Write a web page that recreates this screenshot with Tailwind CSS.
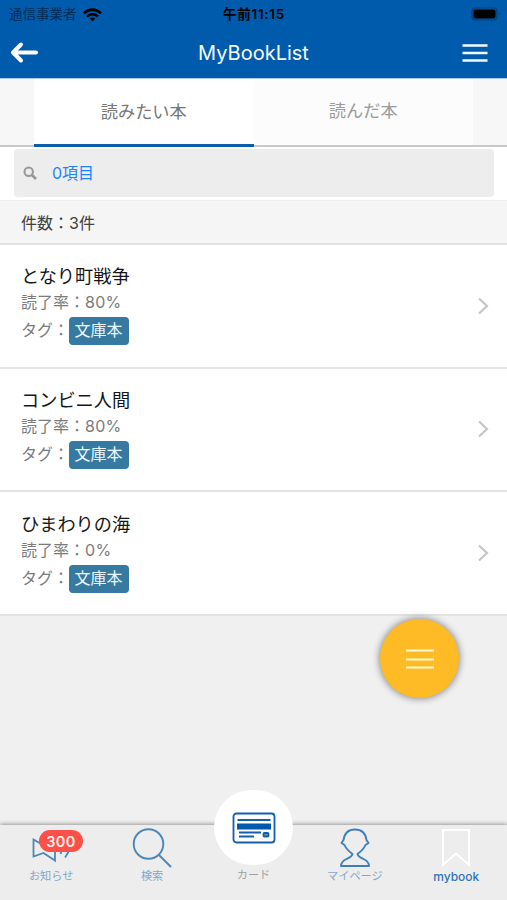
<!DOCTYPE html>
<html lang="ja">
<head>
<meta charset="utf-8">
<title>MyBookList</title>
<script src="https://cdn.jsdelivr.net/npm/@tailwindcss/browser@4"></script>
</head>
<body class="bg-[#f0f0f0]">
<div class="relative flex h-[900px] w-[507px] flex-col overflow-hidden bg-[#f0f0f0] font-['Inter','Noto_Sans_CJK_JP',sans-serif] whitespace-nowrap">
  <header class="h-[79px] shrink-0 border-b border-[#a9c9e8] bg-[#005bac]">
    <div class="grid h-[27px] grid-cols-[1fr_auto_1fr] items-center pr-[6px] pl-[7px] text-[13.5px] leading-[27px]">
      <div class="flex items-center gap-[6px] pt-[1px] pl-[2px]"><span class="text-[#032c55]">通信事業者</span>
        <svg class="h-[14px] w-[19px]" viewBox="0 0 19 14" fill="none" stroke="#000" stroke-width="2.7"><path d="M1 5.2Q9.500-2 18 5.200M4 8.500Q9.500 3.700 15 8.500"/><path d="M6.700 10.500Q9.500 8.300 12.300 10.500L9.500 13.300Z" fill="#000" stroke="none"/></svg>
      </div>
      <div class="pt-[1px] text-center text-[13.500px] font-semibold tracking-[0.7px] text-black">午前11:15</div>
      <svg class="h-[14px] w-[30px] justify-self-end" viewBox="0 0 30 14"><rect x="1" y="1" width="25" height="12" rx="3.500" fill="none" stroke="#034078" stroke-width="1.200"/><rect x="2.500" y="2.500" width="22" height="9" rx="2" fill="#000"/><path d="M28 5.500q1.500 1.500 0 3" fill="#034078"/></svg>
    </div>
    <div class="flex h-[51px] items-center justify-between pr-[19px] pl-[10px]">
      <svg class="h-[24px] w-[28px]" viewBox="0 0 28 24" fill="none" stroke="#fff" stroke-width="4" stroke-linecap="round" stroke-linejoin="round"><path d="M26 11.500H3M11 3.500L3 11.500L11 19.500"/></svg>
      <h1 class="pl-[7px] text-[20px] leading-[24px] font-normal text-[#f5faff]">MyBookList</h1>
      <svg class="h-[20px] w-[26px]" viewBox="0 0 26 20" fill="none" stroke="#f3faff" stroke-width="2.600"><path d="M.500 2.500h25M.500 10h25M.500 17.500h25"/></svg>
    </div>
  </header>
  <nav class="flex h-[68px] shrink-0 border-b-2 border-[#c8c8c8] bg-[#f7f7f7] px-[34px] text-[17.200px]">
    <div class="-mb-[2px] h-[68px] w-[220px] border-b-[3px] border-[#0c5dac] bg-white text-center leading-[65px] text-[#757575]">読みたい本</div>
    <div class="w-[220px] bg-[#fcfcfc] text-center leading-[63px] text-[#9b9b9b]">読んだ本</div>
  </nav>
  <div class="h-[53px] shrink-0 bg-white px-[14px] pt-[2px]">
    <div class="flex h-[48px] w-[480px] items-center gap-[15px] rounded-[4px] bg-[#ededed] pl-[9px] text-[16px] text-[#1f83f5]">
      <svg class="h-[14px] w-[14px]" viewBox="0 0 14 14" fill="none" stroke="#979797" stroke-width="2"><circle cx="5.700" cy="5.700" r="4.200"/><path d="M9 9L13 13" stroke-width="2.600"/></svg>
      <span>0項目</span>
    </div>
  </div>
  <div class="h-[45px] shrink-0 border-t border-b-2 border-t-[#ededed] border-b-[#e2e2e2] bg-[#f5f5f5] pl-[21px] text-[16px] leading-[44px] text-[#404040]">件数：3件</div>
  <main class="h-[371px] shrink-0 bg-white">
    <section class="flex h-[123.500px] items-center justify-between border-b-2 border-[#e4e4e4] pr-[18px] pl-[21px]">
      <div class="-mt-[4px]">
        <h2 class="text-[18.200px] leading-[27px] text-[#161616]">となり町戦争</h2>
        <p class="text-[16px] leading-[25px] text-[#7b7b7b]">読了率：<span class="tracking-[0.3px]">80%</span></p>
        <p class="mt-[1px] flex h-[28px] items-center text-[16px] text-[#7b7b7b]"><span class="w-[47.500px] overflow-hidden">タグ：</span><span class="mt-[2px] h-[28px] w-[60px] rounded-[4px] bg-[#367aa2] text-center leading-[27px] text-[#edf8ff]">文庫本</span></p>
      </div>
      <svg class="h-[18px] w-[12px]" viewBox="0 0 12 18" fill="none" stroke="#c5c5c5" stroke-width="2.200"><path d="M2 1.500L10 9L2 16.500"/></svg>
    </section>
    <section class="flex h-[123.500px] items-center justify-between border-b-2 border-[#e4e4e4] pr-[18px] pl-[21px]">
      <div class="-mt-[4px]">
        <h2 class="text-[18.200px] leading-[27px] text-[#161616]">コンビニ人間</h2>
        <p class="text-[16px] leading-[25px] text-[#7b7b7b]">読了率：<span class="tracking-[0.3px]">80%</span></p>
        <p class="mt-[1px] flex h-[28px] items-center text-[16px] text-[#7b7b7b]"><span class="w-[47.500px] overflow-hidden">タグ：</span><span class="mt-[2px] h-[28px] w-[60px] rounded-[4px] bg-[#367aa2] text-center leading-[27px] text-[#edf8ff]">文庫本</span></p>
      </div>
      <svg class="h-[18px] w-[12px]" viewBox="0 0 12 18" fill="none" stroke="#c5c5c5" stroke-width="2.200"><path d="M2 1.500L10 9L2 16.500"/></svg>
    </section>
    <section class="flex h-[124px] items-center justify-between border-b-2 border-[#e4e4e4] pr-[18px] pl-[21px]">
      <div class="-mt-[4px]">
        <h2 class="text-[18.200px] leading-[27px] text-[#161616]">ひまわりの海</h2>
        <p class="text-[16px] leading-[25px] text-[#7b7b7b]">読了率：<span class="tracking-[0.3px]">0%</span></p>
        <p class="mt-[1px] flex h-[28px] items-center text-[16px] text-[#7b7b7b]"><span class="w-[47.500px] overflow-hidden">タグ：</span><span class="mt-[2px] h-[28px] w-[60px] rounded-[4px] bg-[#367aa2] text-center leading-[27px] text-[#edf8ff]">文庫本</span></p>
      </div>
      <svg class="h-[18px] w-[12px]" viewBox="0 0 12 18" fill="none" stroke="#c5c5c5" stroke-width="2.200"><path d="M2 1.500L10 9L2 16.500"/></svg>
    </section>
  </main>
  <button class="absolute top-[619px] left-[380px] flex size-[79px] items-center justify-center rounded-full bg-[#ffbb25] shadow-[0_0_7px_1px_rgba(0,0,0,0.42)]">
    <svg class="h-[22px] w-[28px]" viewBox="0 0 28 22" fill="none" stroke="#fffbd8" stroke-width="2"><path d="M0 2.500h28M0 11.500h28M0 19.500h28"/></svg>
  </button>
  <footer class="relative mt-auto grid h-[75px] shrink-0 grid-cols-5 bg-[#ededed] text-center text-[11.200px] leading-[17px] text-[#7fa8cf] shadow-[0_-1px_4px_rgba(0,0,0,0.38)]">
    <div class="relative flex flex-col items-center pt-[3px]">
      <svg class="h-[40px] w-[42px]" viewBox="0 0 42 40" fill="none" stroke="#4a87bd" stroke-width="1.800"><path d="M3.500 11.500L13 17L25 9V32.500L13.500 25L3.500 28.500ZM30.500 26l1.500-4M35 29.500q3-3.500 4.500-9"/></svg>
      <span class="absolute top-[5px] left-[39px] h-[22px] w-[44px] rounded-full bg-[#fc5048] text-[14.500px] leading-[23px] font-semibold tracking-[0.4px] text-[#fff0ed]">300</span>
      <span class="pl-[1px]">お知らせ</span>
    </div>
    <div class="flex flex-col items-center pt-[3px]">
      <svg class="h-[40px] w-[40px]" viewBox="0 0 40 40" fill="none" stroke="#4a87bd" stroke-width="1.900" stroke-linecap="round"><circle cx="16.500" cy="16" r="14.800"/><path d="M27 27L38.500 38.500"/></svg>
      <span>検索</span>
    </div>
    <div class="relative flex flex-col items-center">
      <div class="absolute -top-[35px] left-[11.500px] flex h-[75px] w-[79px] items-center justify-center rounded-full bg-white">
        <svg class="h-[32px] w-[44px]" viewBox="0 0 44 32" fill="none" stroke="#125eac" stroke-width="1.800"><rect x="1.500" y="1.500" width="41" height="29" rx="3"/><path d="M5.500 8h33M7 20.500h22M7 24.500h15"/><path d="M5 11.500h34v6H5z" fill="#0059ad" stroke="none"/><rect x="31.500" y="21" width="5" height="3.500" rx="1" fill="#6396c8"/></svg>
      </div>
      <span class="mt-[41.500px] text-[#a0a0a0]">カード</span>
    </div>
    <div class="flex flex-col items-center pt-[3px]">
      <svg class="h-[40px] w-[32px]" viewBox="0 0 32 40" fill="none" stroke="#3f80bb" stroke-width="1.900" stroke-linejoin="round"><path d="M13.500 26C10 23.500 7 20.500 5.500 17L2.500 15L4.500 12C5.500 5 9.500 1.500 16 1.500S26.500 5 27.500 12L29.500 15L26.500 17C25 20.500 22 23.500 18.500 26C19 28.500 21.500 29.500 24.500 31C28.500 33 30 35 30 38H2C2 35 3.500 33 7.500 31C10.500 29.500 13 28.500 13.500 26Z"/></svg>
      <span>マイページ</span>
    </div>
    <div class="flex flex-col items-center pt-[3px]">
      <svg class="h-[40px] w-[30px]" viewBox="0 0 30 40" fill="none" stroke="#fff" stroke-width="2"><path d="M2 2H28V37L15 25.500L2 37Z"/></svg>
      <span class="text-[12px] font-medium text-[#3274b5]">mybook</span>
    </div>
  </footer>
</div>
</body>
</html>
